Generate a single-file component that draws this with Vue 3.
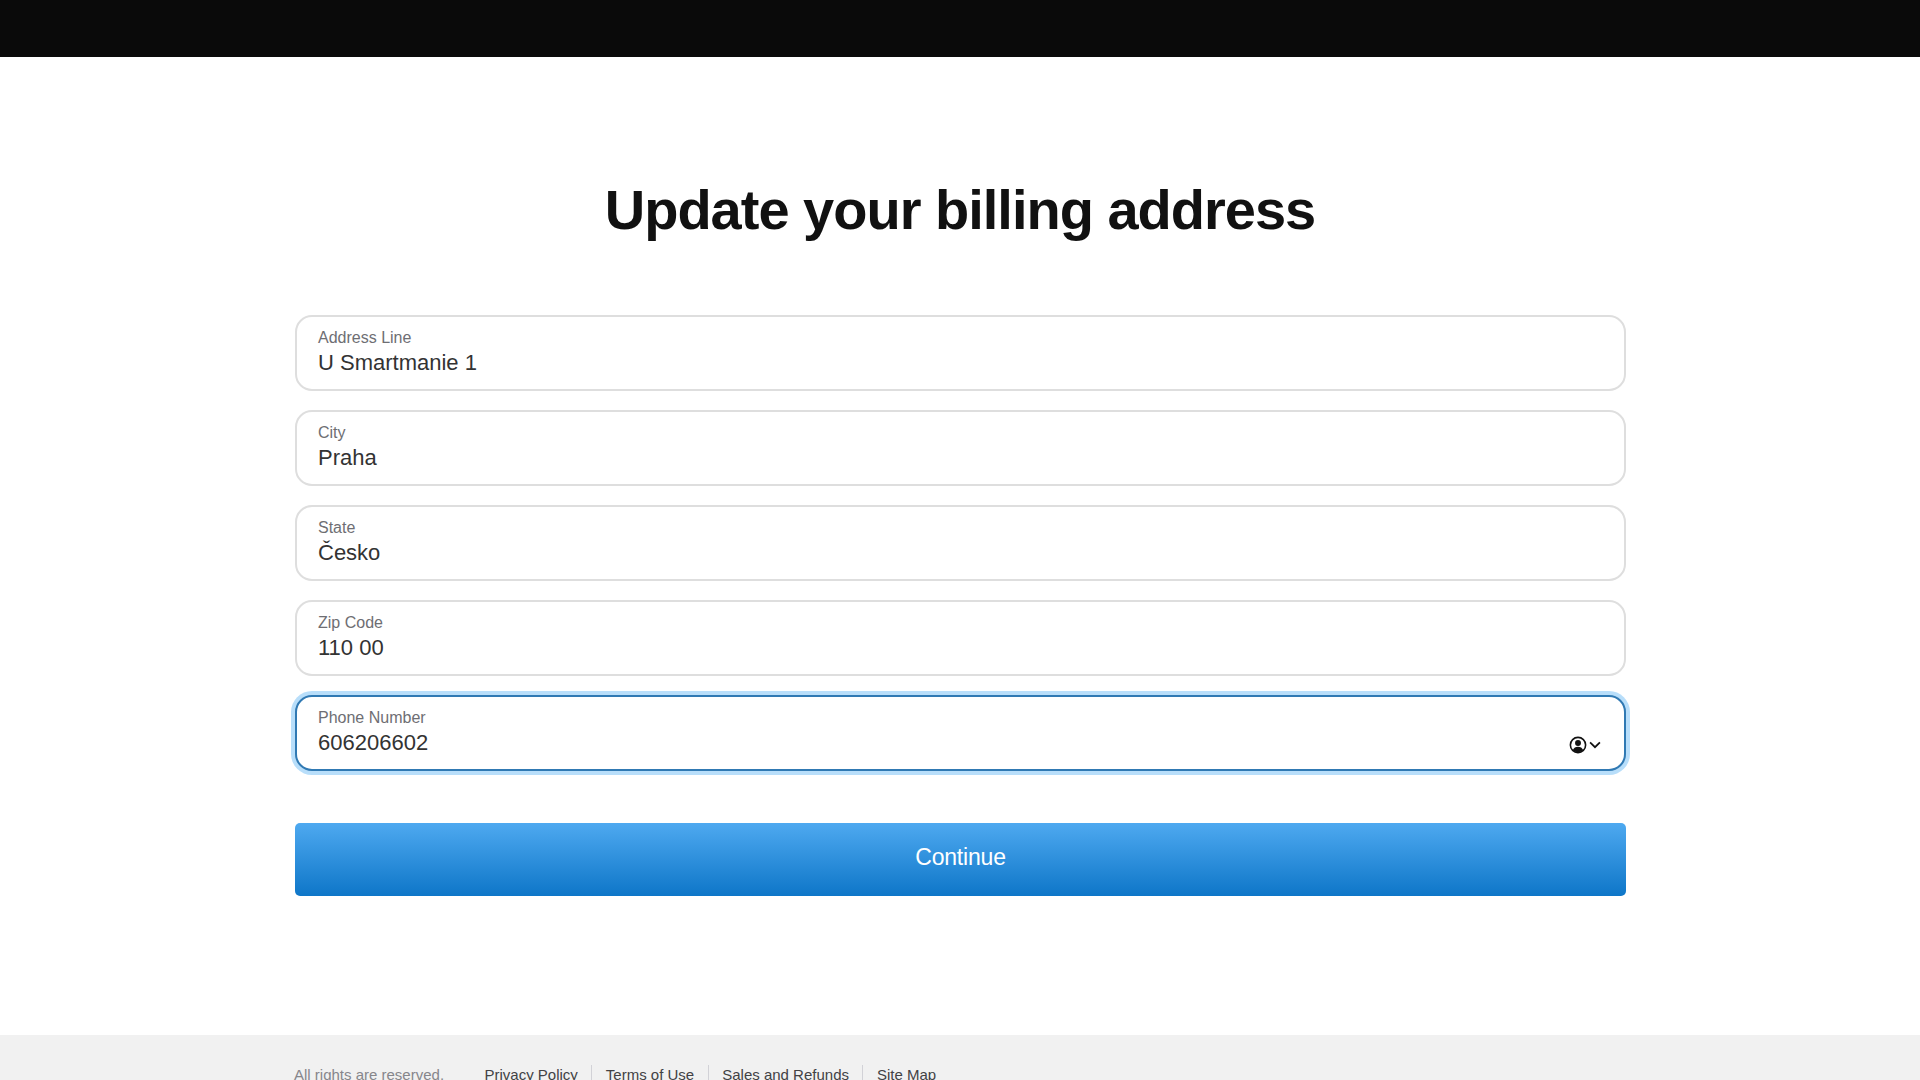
<template>
  <div class="page">
    <header class="topbar"></header>

    <main class="content">
      <h1 class="title">Update your billing address</h1>

      <form class="form" @submit.prevent>
        <div
          v-for="field in fields"
          :key="field.label"
          :class="['field', { 'field--focus': field.focus }]"
        >
          <span class="field__label">{{ field.label }}</span>
          <span class="field__value">{{ field.value }}</span>
          <span v-if="field.focus" class="field__icon">
            <svg width="18" height="18" viewBox="0 0 17 17">
              <circle cx="8.500" cy="8.500" r="7.200" fill="none" stroke="#111" stroke-width="1.500" />
              <circle cx="8.500" cy="6.600" r="2.800" fill="#111" />
              <path d="M3.600 13.400c.8-2.200 2.700-3.200 4.900-3.200s4.100 1 4.900 3.200a7 7 0 0 1-9.800 0z" fill="#111" />
            </svg>
            <svg width="12" height="8" viewBox="0 0 11 7">
              <path d="M1 1l4.500 4.500L10 1" fill="none" stroke="#111" stroke-width="1.600" />
            </svg>
          </span>
        </div>

        <button class="continue" type="submit">Continue</button>
      </form>
    </main>

    <footer class="footer">
      <div class="footer__inner">
        <span class="footer__copy">All rights are reserved.</span>
        <nav class="footer__links">
          <a v-for="link in links" :key="link" class="footer__link">{{ link }}</a>
        </nav>
      </div>
    </footer>
  </div>
</template>

<script setup>
const fields = [
  { label: 'Address Line', value: 'U Smartmanie 1' },
  { label: 'City', value: 'Praha' },
  { label: 'State', value: 'Česko' },
  { label: 'Zip Code', value: '110 00' },
  { label: 'Phone Number', value: '606206602', focus: true }
];

const links = ['Privacy Policy', 'Terms of Use', 'Sales and Refunds', 'Site Map'];
</script>

<style>
html,
body {
  margin: 0;
  height: 1080px;
  overflow: hidden;
  background: #fff;
}
</style>

<style scoped>
.page {
  display: flex;
  flex-direction: column;
  height: 1080px;
  overflow: hidden;
  font-family: "Liberation Sans", Arial, sans-serif;
  color: #1d1d1f;
}

.topbar {
  flex: none;
  height: 57px;
  background: #0a0a0a;
}

.content {
  flex: none;
  width: 1332px;
  height: 978px;
  margin: 0 auto;
  box-sizing: border-box;
  padding-top: 120px;
}

.title {
  margin: 0 0 72px;
  font-size: 56px;
  line-height: 66px;
  font-weight: 700;
  letter-spacing: -1px;
  text-align: center;
  color: #111;
}

.form {
  display: flex;
  flex-direction: column;
  gap: 19px;
  margin-left: 1px;
}

.field {
  position: relative;
  display: flex;
  flex-direction: column;
  height: 76px;
  box-sizing: border-box;
  padding: 11px 21px 0;
  background: #fff;
  border: 2px solid #dedede;
  border-radius: 17px;
}

.field--focus {
  border-color: #3079b3;
  box-shadow: 0 0 0 4px #b8defa;
}

.field__label {
  font-size: 16px;
  line-height: 20px;
  color: #6e6e73;
}

.field__value {
  font-size: 22px;
  line-height: 29px;
  color: #333;
}

.field__icon {
  position: absolute;
  right: 23px;
  bottom: 15px;
  display: flex;
  align-items: center;
  gap: 2px;
}

.continue {
  height: 73px;
  margin-top: 33px;
  padding: 0 0 5px;
  border: 0;
  border-radius: 5px;
  background: linear-gradient(#4ea9f0, #0e76c8);
  color: #fff;
  font-family: inherit;
  font-size: 23px;
  letter-spacing: -0.2px;
}

.footer {
  flex: 1;
  background: #f1f1f1;
}

.footer__inner {
  display: flex;
  align-items: center;
  width: 1332px;
  margin: 0 auto;
  padding-top: 30px;
  font-size: 15px;
  line-height: 20px;
}

.footer__copy {
  width: 177px;
  color: #86868b;
}

.footer__links {
  display: flex;
}

.footer__link {
  padding: 0 13.500px;
  border-right: 1px solid #d2d2d7;
  color: #424245;
}

.footer__link:last-child {
  border-right: 0;
}
</style>
